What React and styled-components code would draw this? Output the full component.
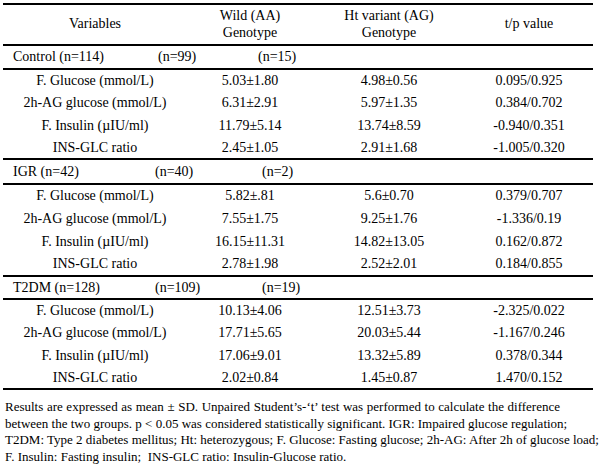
import React from "react";
import styled, { createGlobalStyle } from "styled-components";

const Global = createGlobalStyle`
  html, body { margin: 0; padding: 0; background: #fff; }
  body { font-family: "Liberation Serif", "Times New Roman", serif; color: #000; }
`;

const Page = styled.div`
  width: 600px;
  height: 466px;
  padding: 3px 0 0 3px;
  box-sizing: border-box;
  background: #fff;
`;

const Table = styled.table`
  width: 590px;
  table-layout: fixed;
  border-collapse: collapse;
  font-size: 14px;
  border-top: 2px solid #000;
  border-bottom: 2px solid #000;
`;

const HeadRow = styled.tr`
  height: 41px;
  border-bottom: 2px solid #000;
`;

const HeadCell = styled.th`
  font-weight: normal;
  text-align: center;
  vertical-align: middle;
  line-height: 16.5px;
  padding: 0;
`;

const GroupRow = styled.tr`
  height: ${(p) => p.$h}px;
  border-bottom: 2px solid #000;
  border-top: ${(p) => (p.$first ? "none" : "2px solid #000")};
`;

const GroupCell = styled.td`
  padding: 0 0 0 10px;
  vertical-align: middle;
`;

const GroupLine = styled.div`
  display: grid;
  grid-template-columns: ${(p) => p.$c1}px ${(p) => p.$c2}px auto;
  line-height: 16px;
`;

const DataRow = styled.tr`
  height: ${(p) => p.$h}px;
`;

const Cell = styled.td`
  text-align: center;
  vertical-align: middle;
  padding: 0;
  line-height: 16px;
  white-space: nowrap;
`;

const Note = styled.div`
  margin: 9px 0 0 2px;
  font-size: 13px;
  line-height: 16.6px;
`;

const NoteLine = styled.div`
  width: ${(p) => (p.$w ? `${p.$w}px` : "auto")};
  text-align: ${(p) => (p.$w ? "justify" : "left")};
  text-align-last: ${(p) => (p.$w ? "justify" : "left")};
  white-space: nowrap;
`;

const groups = [
  {
    label: "Control (n=114)",
    n1: "(n=99)",
    n2: "(n=15)",
    c1: 145,
    c2: 100,
    h: 24,
    rh: [23, 22, 23, 22],
    rows: [
      ["F. Glucose (mmol/L)", "5.03±1.80", "4.98±0.56", "0.095/0.925"],
      ["2h-AG glucose (mmol/L)", "6.31±2.91", "5.97±1.35", "0.384/0.702"],
      ["F. Insulin (µIU/ml)", "11.79±5.14", "13.74±8.59", "-0.940/0.351"],
      ["INS-GLC ratio", "2.45±1.05", "2.91±1.68", "-1.005/0.320"],
    ],
  },
  {
    label: "IGR (n=42)",
    n1: "(n=40)",
    n2: "(n=2)",
    c1: 142,
    c2: 107,
    h: 25,
    rh: [23, 23, 23, 23],
    rows: [
      ["F. Glucose (mmol/L)", "5.82±.81", "5.6±0.70", "0.379/0.707"],
      ["2h-AG glucose (mmol/L)", "7.55±1.75", "9.25±1.76", "-1.336/0.19"],
      ["F. Insulin (µIU/ml)", "16.15±11.31", "14.82±13.05", "0.162/0.872"],
      ["INS-GLC ratio", "2.78±1.98", "2.52±2.01", "0.184/0.855"],
    ],
  },
  {
    label: "T2DM (n=128)",
    n1: "(n=109)",
    n2: "(n=19)",
    c1: 142,
    c2: 107,
    h: 23,
    rh: [23, 22, 23, 22],
    rows: [
      ["F. Glucose (mmol/L)", "10.13±4.06", "12.51±3.73", "-2.325/0.022"],
      ["2h-AG glucose (mmol/L)", "17.71±5.65", "20.03±5.44", "-1.167/0.246"],
      ["F. Insulin (µIU/ml)", "17.06±9.01", "13.32±5.89", "0.378/0.344"],
      ["INS-GLC ratio", "2.02±0.84", "1.45±0.87", "1.470/0.152"],
    ],
  },
];

const noteLines = [
  { w: 555, t: "Results are expressed as mean ± SD. Unpaired Student’s-‘t’ test was performed to calculate the difference" },
  { w: 545, t: "between the two groups. p < 0.05 was considered statistically significant. IGR: Impaired glucose regulation;" },
  { w: 588, t: "T2DM: Type 2 diabetes mellitus; Ht: heterozygous; F. Glucose: Fasting glucose; 2h-AG: After 2h of glucose load;" },
  { w: 0, t: "F. Insulin: Fasting insulin;\u00a0 INS-GLC ratio: Insulin-Glucose ratio." },
];

export default function App() {
  return (
    <Page>
      <Global />
      <Table>
        <colgroup>
          <col style={{ width: 184 }} />
          <col style={{ width: 126 }} />
          <col style={{ width: 152 }} />
          <col style={{ width: 128 }} />
        </colgroup>
        <thead>
          <HeadRow>
            <HeadCell>Variables</HeadCell>
            <HeadCell>
              Wild (AA)
              <br />
              Genotype
            </HeadCell>
            <HeadCell>
              Ht variant (AG)
              <br />
              Genotype
            </HeadCell>
            <HeadCell>t/p value</HeadCell>
          </HeadRow>
        </thead>
        {groups.map((g, gi) => (
          <tbody key={g.label}>
            <GroupRow $h={g.h} $first={gi === 0}>
              <GroupCell colSpan={4}>
                <GroupLine $c1={g.c1} $c2={g.c2}>
                  <span>{g.label}</span>
                  <span>{g.n1}</span>
                  <span>{g.n2}</span>
                </GroupLine>
              </GroupCell>
            </GroupRow>
            {g.rows.map((r, ri) => (
              <DataRow key={r[0]} $h={g.rh[ri]}>
                {r.map((v, i) => (
                  <Cell key={i}>{v}</Cell>
                ))}
              </DataRow>
            ))}
          </tbody>
        ))}
      </Table>
      <Note>
        {noteLines.map((l) => (
          <NoteLine key={l.t} $w={l.w}>
            {l.t}
          </NoteLine>
        ))}
      </Note>
    </Page>
  );
}
